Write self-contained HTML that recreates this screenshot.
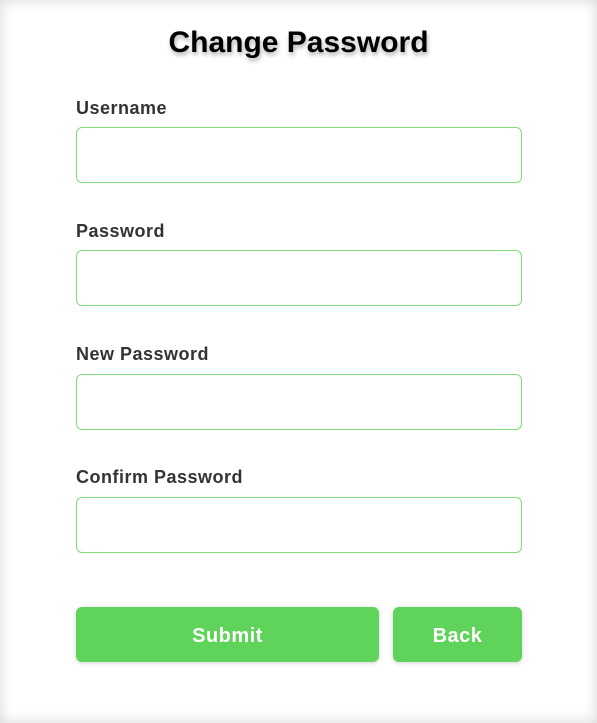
<!DOCTYPE html>
<html><head><style>
html,body{margin:0;padding:0;width:597px;height:723px;background:#fff;overflow:hidden;font-family:"Liberation Sans",Arial,sans-serif}
.card{position:absolute;left:0;top:0;width:597px;height:723px;box-shadow:inset 0 0 14px rgba(0,0,0,.16);background:#fff}
h1{position:absolute;left:0;width:597px;top:23px;margin:0;text-align:center;font-size:30px;font-weight:bold;color:#000;text-shadow:1px 3px 4px rgba(0,0,0,.3);line-height:40px}
.l{position:absolute;left:76px;font-size:18px;font-weight:bold;color:#333;line-height:22px;letter-spacing:0.5px}
.i{position:absolute;left:76px;width:444px;height:54px;border:1px solid #7fe07a;border-radius:6px;background:#fff}
.b{position:absolute;top:607px;height:55px;background:#5fd35a;border-radius:6px;color:#fff;font-size:20px;font-weight:bold;text-align:center;line-height:58px;letter-spacing:0.5px;box-shadow:0 1px 5px rgba(0,0,0,.18)}
</style></head><body><div class="card">
<h1>Change Password</h1>
<div class="l" style="top:97px">Username</div><div class="i" style="top:127px"></div>
<div class="l" style="top:220px">Password</div><div class="i" style="top:250px"></div>
<div class="l" style="top:343px">New Password</div><div class="i" style="top:374px"></div>
<div class="l" style="top:466px">Confirm Password</div><div class="i" style="top:497px"></div>
<div class="b" style="left:76px;width:303px">Submit</div>
<div class="b" style="left:393px;width:129px">Back</div>
</div></body></html>
